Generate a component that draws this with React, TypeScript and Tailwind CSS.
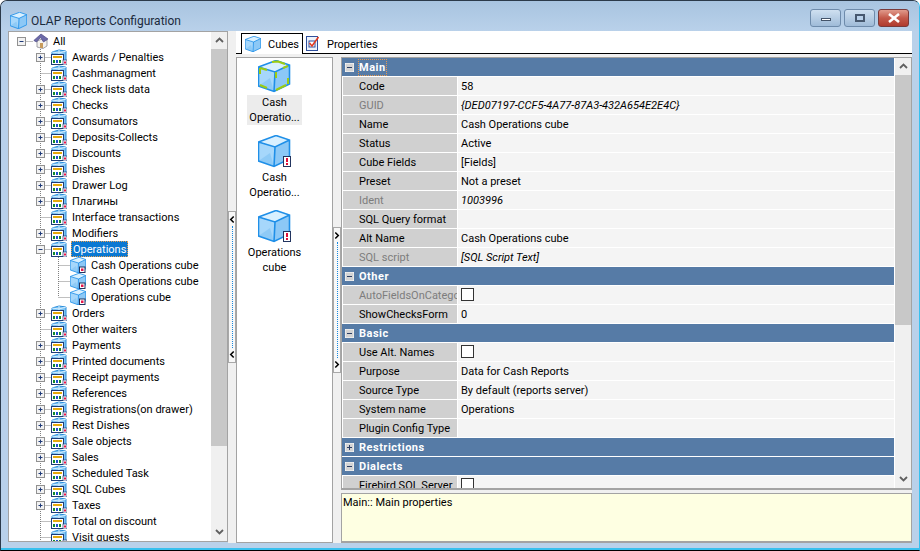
import type { ReactNode } from 'react';

type TreeItem = { label: string; toggle?: 'plus' | 'minus'; children?: string[] };

const treeItems: TreeItem[] = [
  { label: 'Awards / Penalties', toggle: 'plus' },
  { label: 'Cashmanagment' },
  { label: 'Check lists data', toggle: 'plus' },
  { label: 'Checks', toggle: 'plus' },
  { label: 'Consumators', toggle: 'plus' },
  { label: 'Deposits-Collects', toggle: 'plus' },
  { label: 'Discounts', toggle: 'plus' },
  { label: 'Dishes', toggle: 'plus' },
  { label: 'Drawer Log', toggle: 'plus' },
  { label: 'Плагины', toggle: 'plus' },
  { label: 'Interface transactions' },
  { label: 'Modifiers', toggle: 'plus' },
  { label: 'Operations', toggle: 'minus', children: ['Cash Operations cube', 'Cash Operations cube', 'Operations cube'] },
  { label: 'Orders', toggle: 'plus' },
  { label: 'Other waiters' },
  { label: 'Payments', toggle: 'plus' },
  { label: 'Printed documents', toggle: 'plus' },
  { label: 'Receipt payments', toggle: 'plus' },
  { label: 'References', toggle: 'plus' },
  { label: 'Registrations(on drawer)', toggle: 'plus' },
  { label: 'Rest Dishes', toggle: 'plus' },
  { label: 'Sale objects', toggle: 'plus' },
  { label: 'Sales', toggle: 'plus' },
  { label: 'Scheduled Task', toggle: 'plus' },
  { label: 'SQL Cubes', toggle: 'plus' },
  { label: 'Taxes', toggle: 'plus' },
  { label: 'Total on discount' },
  { label: 'Visit guests' },
];

type GridRow =
  | { kind: 'group'; label: string; open: boolean; focus?: boolean }
  | { kind: 'row'; label: string; value?: string; dim?: boolean; italic?: boolean; check?: boolean };

const gridRows: GridRow[] = [
  { kind: 'group', label: 'Main', open: true, focus: true },
  { kind: 'row', label: 'Code', value: '58' },
  { kind: 'row', label: 'GUID', value: '{DED07197-CCF5-4A77-87A3-432A654E2E4C}', dim: true, italic: true },
  { kind: 'row', label: 'Name', value: 'Cash Operations cube' },
  { kind: 'row', label: 'Status', value: 'Active' },
  { kind: 'row', label: 'Cube Fields', value: '[Fields]' },
  { kind: 'row', label: 'Preset', value: 'Not a preset' },
  { kind: 'row', label: 'Ident', value: '1003996', dim: true, italic: true },
  { kind: 'row', label: 'SQL Query format' },
  { kind: 'row', label: 'Alt Name', value: 'Cash Operations cube' },
  { kind: 'row', label: 'SQL script', value: '[SQL Script Text]', dim: true, italic: true },
  { kind: 'group', label: 'Other', open: true },
  { kind: 'row', label: 'AutoFieldsOnCategories', dim: true, check: true },
  { kind: 'row', label: 'ShowChecksForm', value: '0' },
  { kind: 'group', label: 'Basic', open: true },
  { kind: 'row', label: 'Use Alt. Names', check: true },
  { kind: 'row', label: 'Purpose', value: 'Data for Cash Reports' },
  { kind: 'row', label: 'Source Type', value: 'By default (reports server)' },
  { kind: 'row', label: 'System name', value: 'Operations' },
  { kind: 'row', label: 'Plugin Config Type' },
  { kind: 'group', label: 'Restrictions', open: false },
  { kind: 'group', label: 'Dialects', open: true },
  { kind: 'row', label: 'Firebird SQL Server', check: true },
];

function CubeShape({ edge = '#1f8fe8' }: { edge?: string }) {
  return (
    <>
      <path d="M0.5 7 L18 0.5 L31.5 5 L31.5 24 L16 31.5 L0.5 26 Z" fill="#a6d7fb" />
      <path d="M0.5 7 L18 0.5 L31.5 5 L17 12 Z" fill="#d9f0ff" />
      <path d="M17 12 L31.5 5 L31.5 24 L16 31.5 Z" fill="#8cc8f6" />
      <path d="M0.5 26 L12 18 L16 31.5 Z" fill="#7fc2f4" opacity="0.6" />
      <path d="M0.5 7 L18 0.5 L31.5 5 L31.5 24 L16 31.5 L0.5 26 Z M0.5 7 L17 12 L31.5 5 M17 12 L16 31.5" fill="none" stroke={edge} strokeWidth="1.6" />
    </>
  );
}

function CubeBig({ state }: { state: 'selected' | 'warn' }) {
  return (
    <svg width="36" height="34" viewBox="0 0 36 34" className="block ml-[3px]">
      <CubeShape />
      {state === 'selected' && (
        <g fill="none" stroke="#9ccc12" strokeWidth="2">
          <path d="M2 8 L2 14 M2 8 L9 10 M14 2 L20 1.5 L27 4 M18 12 L18 18 M30 6 L25 8 M2 25 L9 28 M18 30 L28 25 M30 24 L30 18" />
        </g>
      )}
      {state === 'warn' && (
        <g>
          <rect x="25.5" y="21.5" width="7" height="10" fill="#fff" stroke="#22345f" />
          <rect x="28" y="23" width="2" height="4" fill="#e0103a" />
          <rect x="28" y="28" width="2" height="2" fill="#e0103a" />
        </g>
      )}
    </svg>
  );
}

function CubeSmall() {
  return (
    <svg width="16" height="16" viewBox="0 0 32 32" className="block shrink-0">
      <CubeShape />
      <rect x="19" y="20" width="11" height="11" fill="#fff" stroke="#22345f" strokeWidth="2" />
      <rect x="22" y="23" width="5" height="5" fill="#e8164a" />
    </svg>
  );
}

function CubeFolder() {
  return (
    <svg width="16" height="16" viewBox="0 0 16 16" className="block shrink-0">
      <path d="M1 3 L8 1 L15 2 L15 12 L1 12 Z" fill="#7fc4f3" stroke="#2a8edc" />
      <path d="M8 1 L8 8 M1 3 L8 4 L15 2" stroke="#d6eeff" fill="none" />
      <rect x="0.5" y="5.5" width="12" height="10" fill="#fff" stroke="#1e3d78" />
      <rect x="2" y="7" width="9" height="2" fill="#e6a90c" />
      <rect x="2" y="11" width="2" height="3" fill="#0f8a2c" />
      <rect x="5" y="11" width="2" height="3" fill="#1f4fd0" />
      <rect x="8" y="11" width="2" height="3" fill="#0f8a2c" />
      <rect x="12" y="11" width="4" height="5" fill="#fff" stroke="#1e3d78" strokeWidth="0.7" />
      <rect x="13" y="12.5" width="2" height="2" fill="#e8164a" />
    </svg>
  );
}

function HouseIcon() {
  return (
    <svg width="16" height="16" viewBox="0 0 16 16" className="block shrink-0">
      <path d="M4 8 L4 14 L10 15.5 L14 13 L14 7 L9 6 Z" fill="#f4f2ee" stroke="#8b8b93" strokeWidth="0.8" />
      <path d="M0.8 7.5 L8 1 L15 6 L10.5 9 L7.5 4.5 L3.5 9 Z" fill="#6c6aa8" stroke="#4d4c86" strokeWidth="0.7" />
      <rect x="7" y="10" width="3" height="5" fill="#c79a5b" />
    </svg>
  );
}

function TreeGutter({ level, toggle, branchOpen, last }: { level: 0 | 1 | 2; toggle?: 'plus' | 'minus'; branchOpen?: boolean; last?: boolean }) {
  // coordinates are relative to the tree's content edge (x = 10 on the page)
  const width = level === 0 ? 23 : level === 1 ? 41 : 60;
  const line = { stroke: '#808080', strokeDasharray: '1 1', strokeWidth: 1, fill: 'none' } as const;
  const cx = level === 0 ? 11.5 : level === 1 ? 30.5 : 48.5;
  return (
    <svg width={width} height="16" className="block shrink-0">
      {level > 0 && <path d="M30.5 0 V16" {...line} />}
      {level === 2 && <path d={last ? 'M48.5 0 V8' : 'M48.5 0 V16'} {...line} />}
      {level === 1 && branchOpen && <path d="M48.5 12 V16" {...line} />}
      <path d={`M${cx} 8.5 H${width}`} {...line} />
      {toggle && (
        <g>
          <rect x={cx - 4} y="4.5" width="8" height="8" fill="#f2f2f2" stroke="#919191" />
          <path d={`M${cx - 2} 8.5 H${cx + 2}`} stroke="#1f3a78" />
          {toggle === 'plus' && <path d={`M${cx} 6.5 V10.5`} stroke="#1f3a78" />}
        </g>
      )}
    </svg>
  );
}

function Chevron({ dir, className }: { dir: 'up' | 'down' | 'left' | 'right'; className?: string }) {
  const d = {
    up: 'M1 6 L4.5 2.5 L8 6',
    down: 'M1 2 L4.5 5.5 L8 2',
    left: 'M5.5 1 L2 4.5 L5.5 8',
    right: 'M1.5 1 L5 4.5 L1.5 8',
  }[dir];
  const wide = dir === 'up' || dir === 'down';
  return (
    <svg width={wide ? 9 : 6} height="9" viewBox={wide ? '0 0 9 9' : '0 0 7 9'} className={className}>
      <path d={d} fill="none" stroke="currentColor" strokeWidth="1.8" />
    </svg>
  );
}

function Scrollbar({ thumb }: { thumb: string }) {
  return (
    <div className="w-4 shrink-0 flex flex-col bg-[#f0f0f0] text-[#606060]">
      <div className="h-[17px] flex items-center justify-center shrink-0">
        <Chevron dir="up" />
      </div>
      <div className={`${thumb} bg-[#c8c8c8] shrink-0`} />
      <div className="flex-1" />
      <div className="h-[17px] flex items-center justify-center shrink-0">
        <Chevron dir="down" />
      </div>
    </div>
  );
}

function Splitter({ dir, height }: { dir: 'left' | 'right'; height: string }) {
  return (
    <div className="w-2 shrink-0 flex items-center bg-[#f0f0f0]">
      <div className={`${height} w-2 border border-[#a8a8a8] bg-[#f8f8f8] flex flex-col items-center justify-between py-[3px] text-black`}>
        <Chevron dir={dir} className="shrink-0" />
        <div className="flex-1 my-[2px] border-l border-dotted border-[#1688e0]" />
        <Chevron dir={dir} className="shrink-0" />
      </div>
    </div>
  );
}

function Tree() {
  return (
    <div className="w-[220px] h-[511px] shrink-0 flex border border-[#a3a3a3] bg-white">
      <div className="flex-1 pt-[1px] pl-[1px] overflow-hidden">
        <div className="flex items-center h-4">
          <TreeGutter level={0} toggle="minus" />
          <HouseIcon />
          <span className="ml-[4px] mt-[2px]">All</span>
        </div>
        {treeItems.map((item) => (
          <div key={item.label}>
            <div className="flex items-center h-4">
              <TreeGutter level={1} toggle={item.toggle} branchOpen={!!item.children} />
              <CubeFolder />
              {item.children ? (
                <span className="ml-[4px] px-[1px] h-4 leading-[15px] bg-[#0a78d2] text-white border border-dotted border-[#e8a050]">{item.label}</span>
              ) : (
                <span className="ml-[5px] mt-[2px] whitespace-nowrap">{item.label}</span>
              )}
            </div>
            {item.children?.map((child, i) => (
              <div key={i} className="flex items-center h-4">
                <TreeGutter level={2} last={i === item.children!.length - 1} />
                <CubeSmall />
                <span className="ml-[5px] mt-[2px] whitespace-nowrap">{child}</span>
              </div>
            ))}
          </div>
        ))}
      </div>
      <Scrollbar thumb="h-[397px]" />
    </div>
  );
}

function CubeTile({ state, children, selected }: { state: 'selected' | 'warn'; children: ReactNode; selected?: boolean }) {
  return (
    <div className="w-[75px] h-[75px] flex flex-col items-center">
      <CubeBig state={state} />
      <div className={`w-[55px] mt-[1px] text-center leading-[15px] ${selected ? 'bg-[#ececec]' : ''}`}>{children}</div>
    </div>
  );
}

function Toggle({ open }: { open: boolean }) {
  return (
    <svg width="9" height="9" className="block shrink-0">
      <rect x="0" y="0" width="9" height="9" fill="#d4d4d4" stroke="#ffffff" strokeWidth="1" />
      <path d="M2 4.5 H7" stroke="#2c3f66" />
      {!open && <path d="M4.5 2 V7" stroke="#2c3f66" />}
    </svg>
  );
}

function PropertyGrid() {
  return (
    <div className="flex-1 min-h-0 flex bg-white border-t border-l border-r border-b-2 border-[#a3a3a3] overflow-hidden">
      <div className="flex-1 flex flex-col gap-px overflow-hidden">
        {gridRows.map((row) =>
          row.kind === 'group' ? (
            <div key={row.label} className="h-[18px] shrink-0 flex items-center bg-[#567ba6] pl-[3px] mr-[1px] text-white font-bold">
              <Toggle open={row.open} />
              <span className={`tracking-[0.5px] leading-[15px] ${row.focus ? 'ml-[4px] border border-dotted border-[#e89a50]' : 'ml-[5px]'}`}>{row.label}</span>
            </div>
          ) : (
            <div key={row.label} className="h-[18px] shrink-0 flex gap-px pl-px mr-[1px] overflow-hidden">
              <div className={`w-[114px] shrink-0 bg-[#d0d0d0] pl-[16px] leading-[20px] overflow-hidden whitespace-nowrap ${row.dim ? 'text-[#7d7d7d]' : 'text-black'}`}>
                {row.label}
              </div>
              <div className={`flex-1 bg-[#f4f4f4] pl-[3px] leading-[20px] whitespace-nowrap ${row.italic ? 'italic' : ''}`}>
                {row.check ? <div className="w-[13px] h-[13px] mt-[2px] bg-white border border-[#333]" /> : row.value}
              </div>
            </div>
          ),
        )}
      </div>
      <Scrollbar thumb="h-[250px]" />
    </div>
  );
}

export default function App() {
  return (
    <div className="w-[920px] h-[551px] flex flex-col overflow-hidden rounded-t-[7px] border border-[#2b3a4a] border-r-[#38c0ee] border-b-black bg-[#b9d1ea] font-['Roboto',sans-serif] text-[11px] text-black">
      <div className="h-[30px] shrink-0 flex items-center bg-gradient-to-b from-[#a8c4e0] to-[#b9d1ea] pl-[9px] pr-[10px]">
        <svg width="17" height="17" viewBox="0 0 32 32" className="mt-[9px] shrink-0">
          <CubeShape />
        </svg>
        <span className="ml-[4px] mt-[10px] text-[12px] text-[#1b2a3c]">OLAP Reports Configuration</span>
        <div className="ml-auto mt-[8px] mb-auto flex gap-[3px]">
          <div className="w-[31px] h-[18px] flex items-center justify-center rounded-[3px] border border-[#6e8bab] bg-gradient-to-b from-[#cfe0f0] to-[#9fbbd8]">
            <div className="w-[10px] h-[3px] mt-[3px] bg-white border-[0.5px] border-[#44546a]" />
          </div>
          <div className="w-[31px] h-[18px] flex items-center justify-center rounded-[3px] border border-[#6e8bab] bg-gradient-to-b from-[#cfe0f0] to-[#9fbbd8]">
            <div className="w-[10px] h-[8px] bg-[#b9d1ea] border-2 border-[#46586f]" />
          </div>
          <div className="w-[31px] h-[18px] flex items-center justify-center rounded-[3px] border border-[#7a3a3a] bg-gradient-to-b from-[#e09a8c] via-[#c4594a] to-[#b03a2e]">
            <svg width="14" height="10" viewBox="0 0 14 10">
              <path d="M2 1 L12 9 M12 1 L2 9" stroke="#fff" strokeWidth="2.6" />
            </svg>
          </div>
        </div>
      </div>

      <div className="flex flex-1 min-h-0 pl-[7px] pr-[7px] pb-[5px]">
        <Tree />
        <Splitter dir="left" height="h-[152px]" />
        <div className="flex-1 min-w-0 flex flex-col bg-white">
          <div className="h-[23px] shrink-0 flex border-b border-black bg-white pl-[5px]">
            <div className="mt-[2px] w-[62px] h-[21px] flex items-center border border-b-0 border-black bg-white pl-[3px] gap-[7px]">
              <svg width="16" height="16" viewBox="0 0 32 32" className="shrink-0">
                <CubeShape />
              </svg>
              <span className="mt-[3px]">Cubes</span>
            </div>
            <div className="mt-[2px] h-[20px] flex items-center pl-[3px] gap-[7px]">
              <svg width="14" height="16" viewBox="0 0 14 16" className="shrink-0">
                <rect x="0.5" y="1.5" width="11" height="14" fill="#eef3fb" stroke="#2f4f9c" />
                <rect x="3" y="6" width="6" height="6" fill="#fff" stroke="#2f4f9c" />
                <path d="M3.5 8 L6 11 L12.5 2" fill="none" stroke="#e23b22" strokeWidth="1.6" />
              </svg>
              <span className="mt-[4px]">Properties</span>
            </div>
          </div>
          <div className="flex flex-1 min-h-0 pt-[3px] bg-[#f0f0f0]">
            <div className="w-[97px] shrink-0 border border-[#a3a3a3] bg-white flex flex-col pt-[2px]">
              <CubeTile state="selected" selected>Cash Operatio...</CubeTile>
              <CubeTile state="warn">Cash Operatio...</CubeTile>
              <CubeTile state="warn">Operations cube</CubeTile>
            </div>
            <Splitter dir="right" height="h-[146px]" />
            <div className="flex-1 min-w-0 flex flex-col">
              <PropertyGrid />
              <div className="h-[50px] mt-[3px] shrink-0 border-l border-t border-r border-b-2 border-[#a3a3a3] bg-[#feffe2] pl-[1px] leading-[18px]">
                Main:: Main properties
              </div>
            </div>
          </div>
        </div>
      </div>
      <div className="h-[2px] shrink-0 bg-[#38c0ee]" />
    </div>
  );
}
